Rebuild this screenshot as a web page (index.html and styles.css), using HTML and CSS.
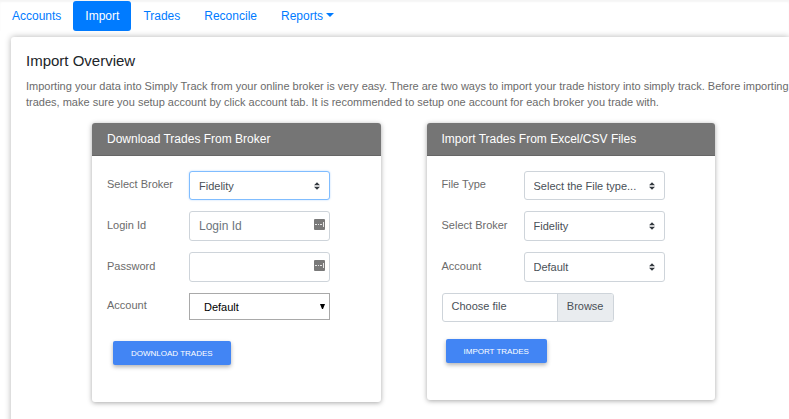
FILE: index.html
```html
<!DOCTYPE html>
<html lang="en">
<head>
    <meta charset="UTF-8">
    <meta name="viewport" content="width=device-width, initial-scale=1.0">
    <title>Simply Track - Import</title>
    <link rel="stylesheet" href="styles.css">
</head>
<body>
    <nav class="nav-pills">
        <a class="nav-link" href="#accounts">Accounts</a>
        <a class="nav-link active" href="#import">Import</a>
        <a class="nav-link" href="#trades">Trades</a>
        <a class="nav-link" href="#reconcile">Reconcile</a>
        <a class="nav-link dropdown-toggle" href="#reports">Reports</a>
    </nav>

    <main class="overview">
        <h1 class="overview-title">Import Overview</h1>
        <p class="overview-text">Importing your data into Simply Track from your online broker is very easy. There are two ways to import your trade history into simply track. Before importing trades, make sure you setup account by click account tab. It is recommended to setup one account for each broker you trade with.</p>

        <div class="cards">
            <section class="card">
                <h2 class="card-header">Download Trades From Broker</h2>
                <form class="card-body">
                    <div class="form-row">
                        <label for="downloadBroker">Select Broker</label>
                        <select class="control custom-select focused" id="downloadBroker">
                            <option>Fidelity</option>
                        </select>
                    </div>
                    <div class="form-row">
                        <label for="loginId">Login Id</label>
                        <input class="control text-input" type="text" id="loginId" placeholder="Login Id">
                    </div>
                    <div class="form-row">
                        <label for="password">Password</label>
                        <input class="control text-input" type="password" id="password">
                    </div>
                    <div class="form-row">
                        <label for="downloadAccount">Account</label>
                        <select class="control plain-select" id="downloadAccount">
                            <option>Default</option>
                        </select>
                    </div>
                    <button class="button download-button" type="button">DOWNLOAD TRADES</button>
                </form>
            </section>

            <section class="card">
                <h2 class="card-header">Import Trades From Excel/CSV Files</h2>
                <form class="card-body">
                    <div class="form-row">
                        <label for="fileType">File Type</label>
                        <select class="control custom-select" id="fileType">
                            <option>Select the File type...</option>
                        </select>
                    </div>
                    <div class="form-row">
                        <label for="importBroker">Select Broker</label>
                        <select class="control custom-select tall" id="importBroker">
                            <option>Fidelity</option>
                        </select>
                    </div>
                    <div class="form-row">
                        <label for="importAccount">Account</label>
                        <select class="control custom-select tall" id="importAccount">
                            <option>Default</option>
                        </select>
                    </div>
                    <input class="file-input" type="file" id="tradeFile">
                    <label class="file-label" for="tradeFile">
                        <span class="file-name">Choose file</span>
                        <span class="file-browse">Browse</span>
                    </label>
                    <button class="button import-button" type="button">IMPORT TRADES</button>
                </form>
            </section>
        </div>
    </main>
</body>
</html>
```
FILE: styles.css
```css
* {
    box-sizing: border-box;
}

body {
    margin: 0;
    min-height: 100vh;
    display: flex;
    flex-direction: column;
    font-family: "Liberation Sans", Arial, sans-serif;
    font-size: 11px;
    color: #6b6b6b;
    background-color: #fff;
    overflow: hidden;
}

/* Navigation */
.nav-pills {
    display: flex;
    padding-top: 1px;
    box-shadow: inset 0 2px 2px #f5f5f5;
}

.nav-link {
    padding: 6px 12px;
    font-size: 12px;
    line-height: 18px;
    color: #007bff;
    text-decoration: none;
    border-radius: 3px;
}

.nav-link.active {
    color: #fff;
    background-color: #007bff;
}

.dropdown-toggle::after {
    content: "";
    display: inline-block;
    margin-left: 3px;
    vertical-align: 3px;
    border-top: 4px solid;
    border-left: 4px solid transparent;
    border-right: 4px solid transparent;
}

/* Overview panel */
.overview {
    flex: 1;
    margin: 6px 0 0 11px;
    padding: 15px 0 24px 15px;
    border-radius: 3px 0 0 0;
    box-shadow: 0 0 6px rgba(0, 0, 0, 0.3);
}

.overview-title {
    margin: 0 0 8px;
    font-size: 15px;
    font-weight: normal;
    line-height: 18px;
    color: #212529;
}

.overview-text {
    margin: 0;
    line-height: 16px;
}

.cards {
    display: grid;
    grid-template-columns: 1fr 1fr;
    gap: 46px;
    align-items: start;
    padding: 13px 74px 0 66px;
}

.card {
    border-radius: 3px;
    box-shadow: 0 1px 5px rgba(0, 0, 0, 0.35);
}

.card-header {
    margin: 0;
    padding: 7px 15px;
    font-size: 12px;
    font-weight: normal;
    line-height: 18px;
    color: #fff;
    background-color: #757575;
    border-bottom: 1px solid #666;
    border-radius: 3px 3px 0 0;
}

.card-body {
    padding: 15px 15px 37px;
}

/* Form controls */
.form-row {
    display: flex;
    align-items: center;
    margin-bottom: 11px;
}

.form-row label {
    width: 82px;
    padding-bottom: 3px;
}

.control {
    width: 141px;
    height: 29px;
    margin: 0;
    padding: 0 9px;
    font-family: inherit;
    font-size: 11px;
    color: #495057;
    background-color: #fff;
    border: 1px solid #ced4da;
    border-radius: 3px;
    outline: none;
}

.custom-select {
    appearance: none;
    background-image: url("data:image/svg+xml,%3Csvg xmlns='http://www.w3.org/2000/svg' viewBox='0 0 4 5'%3E%3Cpath fill='%23343a40' d='M2 0L0 2h4zm0 5L0 3h4z'/%3E%3C/svg%3E");
    background-repeat: no-repeat;
    background-position: right 9px center;
    background-size: 6px 8px;
}

.focused {
    border-color: #80bdff;
    box-shadow: 0 0 2px rgba(0, 123, 255, 0.3);
}

.tall,
.text-input {
    height: 30px;
}

.text-input {
    font-size: 12px;
    background-image: url("data:image/svg+xml,%3Csvg xmlns='http://www.w3.org/2000/svg' viewBox='0 0 11 11'%3E%3Crect width='11' height='11' rx='1' fill='%23797979'/%3E%3Cpath fill='%23e5e5e5' d='M1 5h2v1H1zM4 5h1v1H4zM6 5h2v1H6zM9 3h1v5H9z'/%3E%3C/svg%3E");
    background-repeat: no-repeat;
    background-position: right 4px top 7px;
    background-size: 11px 11px;
}

.text-input::placeholder {
    color: #6c757d;
}

.plain-select {
    appearance: none;
    height: 27px;
    padding: 0 14px;
    color: #000;
    border-color: #a9a9a9;
    border-radius: 0;
    background-image: url("data:image/svg+xml,%3Csvg xmlns='http://www.w3.org/2000/svg' viewBox='0 0 5 5'%3E%3Cpath d='M0 0h5L3 5H2z'/%3E%3C/svg%3E");
    background-repeat: no-repeat;
    background-position: right 4px center;
    background-size: 5px 5px;
}

/* The native file box is hidden, its label is the visible control */
.file-input {
    position: absolute;
    width: 1px;
    height: 1px;
    opacity: 0;
}

.file-label {
    display: flex;
    width: 172px;
    line-height: 25px;
    color: #495057;
    border: 1px solid #ced4da;
    border-radius: 3px;
    overflow: hidden;
}

.file-name {
    flex: 1;
    padding: 0 9px 2px;
}

.file-browse {
    padding: 0 9px 2px;
    background-color: #e9ecef;
    border-left: 1px solid #ced4da;
}

.button {
    display: block;
    height: 24px;
    padding: 0 18px;
    font-family: inherit;
    font-size: 8px;
    color: #fff;
    background-color: #4285f4;
    border: 0;
    border-radius: 2px;
    box-shadow: 0 2px 4px rgba(0, 0, 0, 0.3);
}

.download-button {
    margin: 21px 0 0 6px;
}

.import-button {
    margin: 17px 0 0 4px;
}
```
